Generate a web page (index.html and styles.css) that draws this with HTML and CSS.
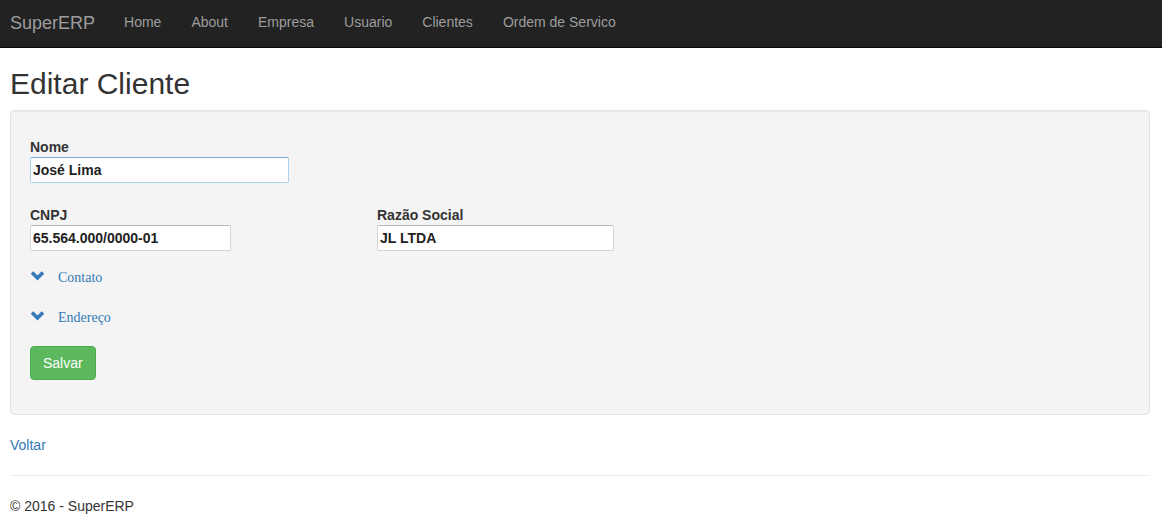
FILE: index.html
```html
<!DOCTYPE html>
<html>
<head>
<meta charset="utf-8">
<title>Editar Cliente</title>
<link rel="stylesheet" href="styles.css">
</head>
<body>
<nav class="navbar">
  <a class="brand" href="#">SuperERP</a>
  <ul class="nav">
    <li><a href="#">Home</a></li>
    <li><a href="#">About</a></li>
    <li><a href="#">Empresa</a></li>
    <li><a href="#">Usuario</a></li>
    <li><a href="#">Clientes</a></li>
    <li><a href="#">Ordem de Servico</a></li>
  </ul>
</nav>
<main class="container">
  <h2 class="title">Editar Cliente</h2>
  <div class="well">
    <div class="field">
      <label>Nome</label>
      <input class="input input-nome focus" type="text" value="José Lima">
    </div>
    <div class="row">
      <div class="field">
        <label>CNPJ</label>
        <input class="input input-cnpj" type="text" value="65.564.000/0000-01">
      </div>
      <div class="field field-razao">
        <label>Razão Social</label>
        <input class="input input-razao" type="text" value="JL LTDA">
      </div>
    </div>
    <a class="toggle" href="#"><svg class="chev" width="15" height="11" viewBox="0 0 15 11"><polyline points="2,2.5 7.5,8 13,2.5" fill="none" stroke="#337ab7" stroke-width="3.6" stroke-linecap="butt" stroke-linejoin="miter"/></svg><span>Contato</span></a>
    <a class="toggle" href="#"><svg class="chev" width="15" height="11" viewBox="0 0 15 11"><polyline points="2,2.5 7.5,8 13,2.5" fill="none" stroke="#337ab7" stroke-width="3.6" stroke-linecap="butt" stroke-linejoin="miter"/></svg><span>Endereço</span></a>
    <button class="btn-success" type="button">Salvar</button>
  </div>
  <a class="back" href="#">Voltar</a>
  <hr class="sep">
  <footer class="footer">© 2016 - SuperERP</footer>
</main>
</body>
</html>
```
FILE: styles.css
```css
* { box-sizing: border-box; }
body {
  margin: 0;
  font-family: "Liberation Sans", Arial, sans-serif;
  font-size: 14px;
  line-height: 1.42857;
  color: #333;
  background: #fff;
}
a { text-decoration: none; }
.navbar {
  height: 48px;
  background: #222;
  border-bottom: 1px solid #080808;
  display: flex;
  align-items: center;
  padding: 0 10px;
}
.brand {
  color: #9d9d9d;
  font-size: 18px;
  margin-right: 14px;
}
.nav {
  list-style: none;
  margin: 0;
  padding: 0;
  display: flex;
}
.nav a {
  display: block;
  color: #9d9d9d;
  padding: 0 15px;
  padding-bottom: 1px;
}
.container {
  padding: 0 12px 0 10px;
}
.title {
  font-size: 30px;
  font-weight: 500;
  margin: 19px 0 10px;
  line-height: 1.1;
}
.well {
  background: #f4f4f4;
  border: 1px solid #e3e3e3;
  border-radius: 4px;
  box-shadow: inset 0 1px 1px rgba(0,0,0,.05);
  padding: 26px 19px 34px;
  display: flex;
  flex-direction: column;
  align-items: flex-start;
}
.field {
  display: flex;
  flex-direction: column;
}
.field label {
  font-weight: bold;
  line-height: 20px;
  margin-bottom: 0;
}
.row {
  display: flex;
  margin-top: 22px;
}
.field-razao { margin-left: 146px; }
.input {
  height: 26px;
  font-family: "Liberation Sans", Arial, sans-serif;
  font-size: 14px;
  font-weight: bold;
  color: #222;
  background: #fff;
  border: 1px solid #d6d6d6;
  border-top-color: #b9b9b9;
  border-radius: 2px;
  padding: 1px 2px;
  margin: 0;
  outline: none;
}
.input.focus { border-color: #a8d2ee; border-top-color: #7fa9cf; }
.input-nome { width: 259px; }
.input-cnpj { width: 201px; }
.input-razao { width: 237px; }
.toggle {
  display: flex;
  align-items: center;
  color: #337ab7;
  font-family: "Liberation Serif", "Times New Roman", serif;
  font-size: 14px;
  height: 20px;
}
.toggle:first-of-type { margin-top: 17px; }
.toggle + .toggle { margin-top: 20px; }
.chev { margin: -5px 13px 0 0; }
.btn-success {
  margin-top: 18px;
  height: 34px;
  padding: 0 12px;
  background: #5cb85c;
  border: 1px solid #4cae4c;
  border-radius: 4px;
  color: #fff;
  font-family: "Liberation Sans", Arial, sans-serif;
  font-size: 14px;
}
.back {
  display: inline-block;
  margin-top: 21px;
  color: #337ab7;
}
.sep {
  border: 0;
  border-top: 1px solid #eee;
  margin: 19px 0 20px;
}
.footer {
  line-height: 20px;
}
```
